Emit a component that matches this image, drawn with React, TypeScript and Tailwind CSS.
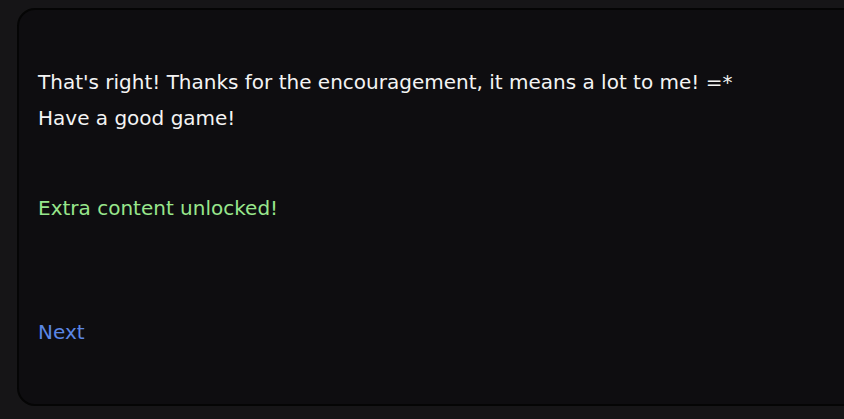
export default function App() {
  return (
    <div className="min-h-[419px] w-[844px] overflow-hidden bg-[#161517] pt-2 pl-[17px] font-['DejaVu_Sans',sans-serif] text-[20px]">
      <div className="w-[880px] h-[398px] rounded-[18px] border-2 border-[#050505] bg-[#0e0d10] pl-[19px] pt-[54px]">
        <div className="leading-[36px] text-[#f4f4f4]">
          <p>That's right! Thanks for the encouragement, it means a lot to me! =*</p>
          <p>Have a good game!</p>
        </div>
        <p className="mt-[54px] leading-[36px] text-[#98e68c]">Extra content unlocked!</p>
        <p className="mt-[88px] leading-[36px] text-[#5b86e5]">Next</p>
      </div>
    </div>
  );
}
